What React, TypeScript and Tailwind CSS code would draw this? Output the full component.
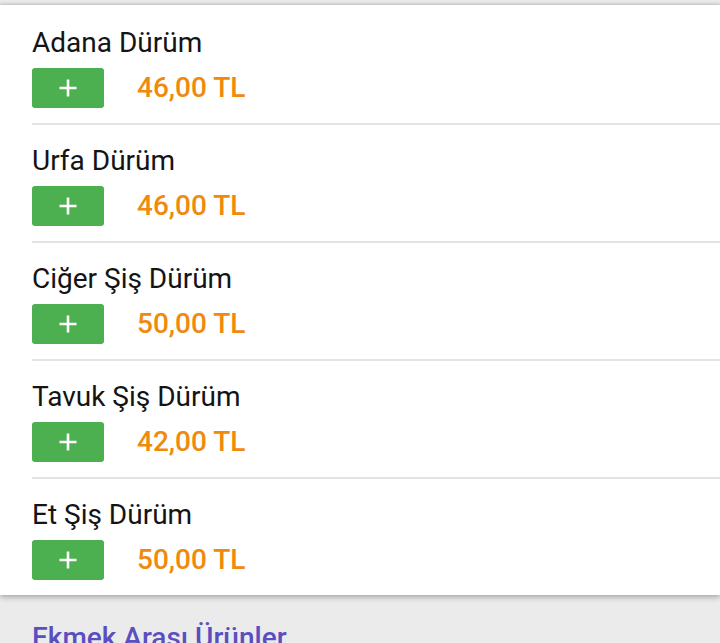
const items = [
  { name: "Adana Dürüm", price: "46,00 TL" },
  { name: "Urfa Dürüm", price: "46,00 TL" },
  { name: "Ciğer Şiş Dürüm", price: "50,00 TL" },
  { name: "Tavuk Şiş Dürüm", price: "42,00 TL" },
  { name: "Et Şiş Dürüm", price: "50,00 TL" },
];

function PlusIcon() {
  return (
    <svg width="20" height="20" viewBox="0 0 20 20" fill="none">
      <path d="M10 1.5v17M1.5 10h17" stroke="white" strokeWidth="2.6" />
    </svg>
  );
}

export default function App() {
  return (
    <div
      className="min-h-[643px] w-[720px] overflow-hidden bg-[#ebebeb] pt-[5px]"
      style={{ fontFamily: "Roboto, 'Noto Sans', sans-serif" }}
    >
      {/* Product card */}
      <div className="bg-white pt-[2px] shadow-[0_2px_6px_rgba(0,0,0,0.3),0_-1px_3px_rgba(0,0,0,0.12)]">
        {items.map((item, i) => (
          <div
            key={item.name}
            className={
              i < items.length - 1
                ? "ml-8 border-b-2 border-[#e3e3e3] pt-5 pb-[15px]"
                : "ml-8 pt-5 pb-[15px]"
            }
          >
            <p className="text-[28px] leading-8 text-[#141414]">{item.name}</p>
            <div className="mt-[9px] flex items-center">
              <button className="flex h-10 w-[72px] items-center justify-center rounded-[3px] bg-[#4caf50]">
                <PlusIcon />
              </button>
              <span className="ml-[33px] text-[28px] font-medium leading-8 text-[#f08a0c]">
                {item.price}
              </span>
            </div>
          </div>
        ))}
      </div>

      {/* Next category */}
      <h2 className="ml-8 mt-[27px] text-[28px] font-medium leading-8 text-[#5b4fc0]">
        Ekmek Arası Ürünler
      </h2>
    </div>
  );
}
